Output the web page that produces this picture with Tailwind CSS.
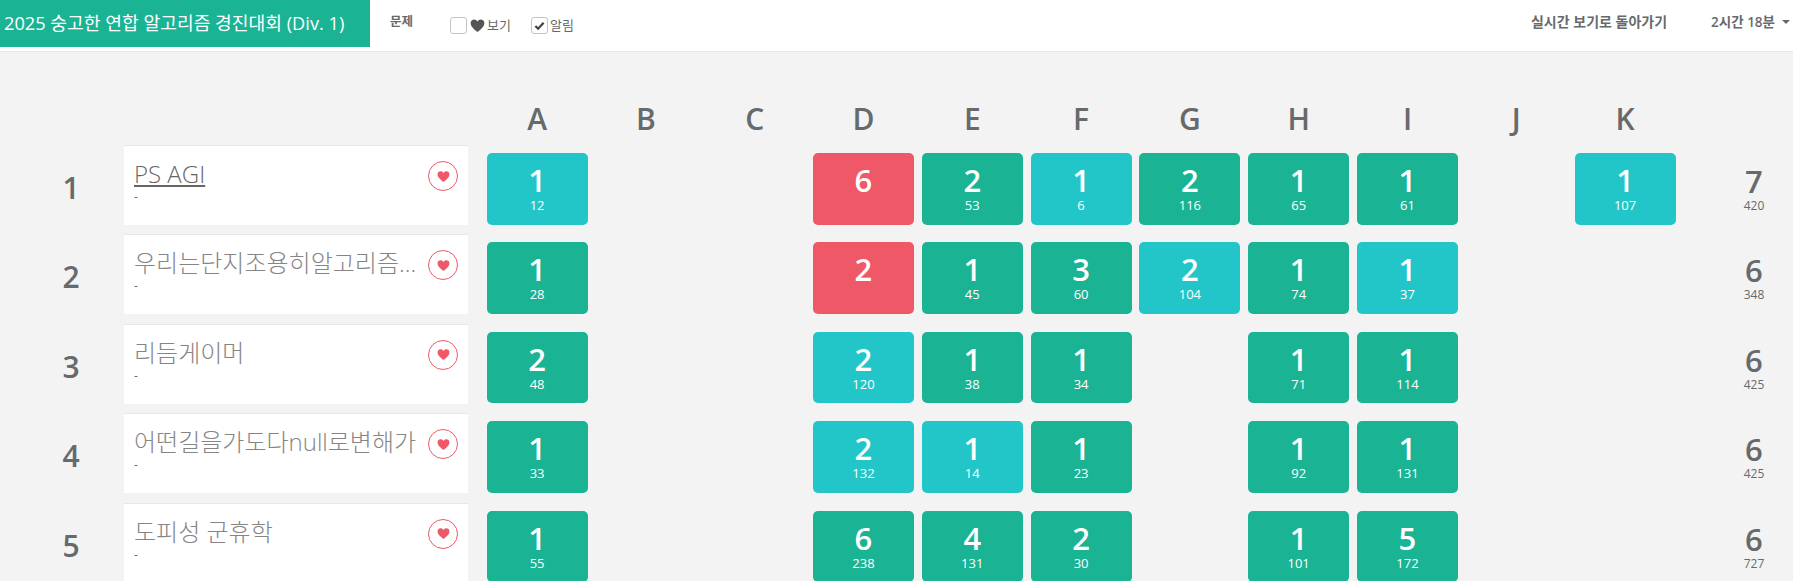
<!DOCTYPE html>
<html lang="ko">
<head>
  <meta charset="UTF-8" />
  <title>2025 숭고한 연합 알고리즘 경진대회 (Div. 1)</title>
  <script src="https://cdn.jsdelivr.net/npm/@tailwindcss/browser@4"></script>
</head>
<body class="h-[581px] overflow-hidden bg-[#f3f3f3] font-['Open_Sans','Noto_Sans_CJK_KR',sans-serif] text-[#666a6c]">

  <!-- Header -->
  <header class="flex h-[52px] items-start border-b border-[#e7e7e7] bg-white">
    <a class="flex h-[47px] w-[370px] items-center bg-[#1ab394] pl-1 text-[18.2px] text-white">2025 숭고한 연합 알고리즘 경진대회 (Div. 1)</a>
    <span class="ml-5 mt-[13px] text-[12.5px] leading-[18px] font-bold">문제</span>
    <label class="ml-[37px] mt-4 flex items-center text-[13px]">
      <span class="h-[17px] w-[17px] rounded-[3px] border border-[#c4c4c4] bg-white"></span>
      <svg class="ml-[3px] h-[15px] w-[15px] text-[#555]" viewBox="0 0 24 24" fill="currentColor"><path d="M12 22S1 15 1 8.200C1 4.600 3.700 2.500 6.600 2.500c2.300 0 4.200 1.200 5.400 3.200 1.200-2 3.100-3.200 5.400-3.200 2.900 0 5.600 2.100 5.600 5.700C23 15 12 22 12 22z"/></svg>
      <span class="ml-[2px]">보기</span>
    </label>
    <label class="ml-[20px] mt-4 flex items-center text-[13px]">
      <span class="flex h-[17px] w-[17px] items-center justify-center rounded-[3px] border border-[#c4c4c4] bg-white">
        <svg class="h-[11px] w-[11px]" viewBox="0 0 24 24" fill="none" stroke="#444" stroke-width="5"><path d="M3 13l6 6L21 6"/></svg>
      </span>
      <span class="ml-[2px]">알림</span>
    </label>
    <a class="ml-auto mt-[13px] text-[14px] leading-[18px] font-semibold">실시간 보기로 돌아가기</a>
    <a class="ml-[44px] mr-[3px] mt-[13px] flex items-center text-[13.5px] leading-[18px] font-semibold">2시간 18분
      <span class="ml-[7px] h-0 w-0 border-x-[4px] border-t-[4px] border-x-transparent border-t-[#666a6c]"></span>
    </a>
  </header>

  <!-- Scoreboard -->
  <main class="mt-[43px] grid grid-cols-[124px_358.7px_repeat(11,108.8px)_113px] grid-rows-[50px] auto-rows-[89.4px]">
    <div></div><div></div>
    <div class="text-center text-[30px] leading-[47px] font-semibold">A</div>
    <div class="text-center text-[30px] leading-[47px] font-semibold">B</div>
    <div class="text-center text-[30px] leading-[47px] font-semibold">C</div>
    <div class="text-center text-[30px] leading-[47px] font-semibold">D</div>
    <div class="text-center text-[30px] leading-[47px] font-semibold">E</div>
    <div class="text-center text-[30px] leading-[47px] font-semibold">F</div>
    <div class="text-center text-[30px] leading-[47px] font-semibold">G</div>
    <div class="text-center text-[30px] leading-[47px] font-semibold">H</div>
    <div class="text-center text-[30px] leading-[47px] font-semibold">I</div>
    <div class="text-center text-[30px] leading-[47px] font-semibold">J</div>
    <div class="text-center text-[30px] leading-[47px] font-semibold">K</div>
    <div></div>

    <!-- 1 -->
    <div class="pl-[18px] pt-[23px] text-center text-[30px] leading-[40px] font-semibold">1</div>
    <div class="relative h-[80px] w-[344px] border-t border-[#e7e7e7] bg-white pl-[10px] pr-[51px]">
      <div class="truncate pt-[10px] text-[24px] leading-[36px] font-light text-[#666] underline">PS AGI</div>
      <div class="-mt-[2px] text-[12px] leading-[14px]">-</div>
      <span class="absolute left-[304px] top-[15px] flex h-[30px] w-[30px] items-center justify-center rounded-full border border-[#ef5866]"><svg class="h-[13px] w-[13px] text-[#ef5866]" viewBox="0 0 24 24" fill="currentColor"><path d="M12 22S1 15 1 8.200C1 4.600 3.700 2.500 6.600 2.500c2.300 0 4.200 1.200 5.400 3.200 1.200-2 3.100-3.200 5.400-3.200 2.900 0 5.600 2.100 5.600 5.700C23 15 12 22 12 22z"/></svg></span>
    </div>
    <div class="mx-[3.9px] mt-2 h-[71.5px] rounded-[5px] bg-[#23c6c8] pt-[8px] text-center text-white"><div class="text-[31px] leading-[38px] font-semibold">1</div><div class="-mt-[1px] text-[13px] leading-[14px]">12</div></div>
    <div></div><div></div>
    <div class="mx-[3.9px] mt-2 h-[71.5px] rounded-[5px] bg-[#ef5866] pt-[8px] text-center text-white"><div class="text-[31px] leading-[38px] font-semibold">6</div></div>
    <div class="mx-[3.9px] mt-2 h-[71.5px] rounded-[5px] bg-[#1ab394] pt-[8px] text-center text-white"><div class="text-[31px] leading-[38px] font-semibold">2</div><div class="-mt-[1px] text-[13px] leading-[14px]">53</div></div>
    <div class="mx-[3.9px] mt-2 h-[71.5px] rounded-[5px] bg-[#23c6c8] pt-[8px] text-center text-white"><div class="text-[31px] leading-[38px] font-semibold">1</div><div class="-mt-[1px] text-[13px] leading-[14px]">6</div></div>
    <div class="mx-[3.9px] mt-2 h-[71.5px] rounded-[5px] bg-[#1ab394] pt-[8px] text-center text-white"><div class="text-[31px] leading-[38px] font-semibold">2</div><div class="-mt-[1px] text-[13px] leading-[14px]">116</div></div>
    <div class="mx-[3.9px] mt-2 h-[71.5px] rounded-[5px] bg-[#1ab394] pt-[8px] text-center text-white"><div class="text-[31px] leading-[38px] font-semibold">1</div><div class="-mt-[1px] text-[13px] leading-[14px]">65</div></div>
    <div class="mx-[3.9px] mt-2 h-[71.5px] rounded-[5px] bg-[#1ab394] pt-[8px] text-center text-white"><div class="text-[31px] leading-[38px] font-semibold">1</div><div class="-mt-[1px] text-[13px] leading-[14px]">61</div></div>
    <div></div>
    <div class="mx-[3.9px] mt-2 h-[71.5px] rounded-[5px] bg-[#23c6c8] pt-[8px] text-center text-white"><div class="text-[31px] leading-[38px] font-semibold">1</div><div class="-mt-[1px] text-[13px] leading-[14px]">107</div></div>
    <div class="pl-9 pt-[17px] text-center"><div class="text-[31px] leading-[38px] font-semibold">7</div><div class="-mt-[1px] text-[12px] leading-[14px]">420</div></div>

    <!-- 2 -->
    <div class="pl-[18px] pt-[23px] text-center text-[30px] leading-[40px] font-semibold">2</div>
    <div class="relative h-[80px] w-[344px] border-t border-[#e7e7e7] bg-white pl-[10px] pr-[51px]">
      <div class="truncate pt-[10px] text-[24px] leading-[36px] font-light text-[#858585]">우리는단지조용히알고리즘을풀뿐입니다</div>
      <div class="-mt-[2px] text-[12px] leading-[14px]">-</div>
      <span class="absolute left-[304px] top-[15px] flex h-[30px] w-[30px] items-center justify-center rounded-full border border-[#ef5866]"><svg class="h-[13px] w-[13px] text-[#ef5866]" viewBox="0 0 24 24" fill="currentColor"><path d="M12 22S1 15 1 8.200C1 4.600 3.700 2.500 6.600 2.500c2.300 0 4.200 1.200 5.400 3.200 1.200-2 3.100-3.200 5.400-3.200 2.900 0 5.600 2.100 5.600 5.700C23 15 12 22 12 22z"/></svg></span>
    </div>
    <div class="mx-[3.9px] mt-2 h-[71.5px] rounded-[5px] bg-[#1ab394] pt-[8px] text-center text-white"><div class="text-[31px] leading-[38px] font-semibold">1</div><div class="-mt-[1px] text-[13px] leading-[14px]">28</div></div>
    <div></div><div></div>
    <div class="mx-[3.9px] mt-2 h-[71.5px] rounded-[5px] bg-[#ef5866] pt-[8px] text-center text-white"><div class="text-[31px] leading-[38px] font-semibold">2</div></div>
    <div class="mx-[3.9px] mt-2 h-[71.5px] rounded-[5px] bg-[#1ab394] pt-[8px] text-center text-white"><div class="text-[31px] leading-[38px] font-semibold">1</div><div class="-mt-[1px] text-[13px] leading-[14px]">45</div></div>
    <div class="mx-[3.9px] mt-2 h-[71.5px] rounded-[5px] bg-[#1ab394] pt-[8px] text-center text-white"><div class="text-[31px] leading-[38px] font-semibold">3</div><div class="-mt-[1px] text-[13px] leading-[14px]">60</div></div>
    <div class="mx-[3.9px] mt-2 h-[71.5px] rounded-[5px] bg-[#23c6c8] pt-[8px] text-center text-white"><div class="text-[31px] leading-[38px] font-semibold">2</div><div class="-mt-[1px] text-[13px] leading-[14px]">104</div></div>
    <div class="mx-[3.9px] mt-2 h-[71.5px] rounded-[5px] bg-[#1ab394] pt-[8px] text-center text-white"><div class="text-[31px] leading-[38px] font-semibold">1</div><div class="-mt-[1px] text-[13px] leading-[14px]">74</div></div>
    <div class="mx-[3.9px] mt-2 h-[71.5px] rounded-[5px] bg-[#23c6c8] pt-[8px] text-center text-white"><div class="text-[31px] leading-[38px] font-semibold">1</div><div class="-mt-[1px] text-[13px] leading-[14px]">37</div></div>
    <div></div><div></div>
    <div class="pl-9 pt-[17px] text-center"><div class="text-[31px] leading-[38px] font-semibold">6</div><div class="-mt-[1px] text-[12px] leading-[14px]">348</div></div>

    <!-- 3 -->
    <div class="pl-[18px] pt-[23px] text-center text-[30px] leading-[40px] font-semibold">3</div>
    <div class="relative h-[80px] w-[344px] border-t border-[#e7e7e7] bg-white pl-[10px] pr-[51px]">
      <div class="truncate pt-[10px] text-[24px] leading-[36px] font-light text-[#858585]">리듬게이머</div>
      <div class="-mt-[2px] text-[12px] leading-[14px]">-</div>
      <span class="absolute left-[304px] top-[15px] flex h-[30px] w-[30px] items-center justify-center rounded-full border border-[#ef5866]"><svg class="h-[13px] w-[13px] text-[#ef5866]" viewBox="0 0 24 24" fill="currentColor"><path d="M12 22S1 15 1 8.200C1 4.600 3.700 2.500 6.600 2.500c2.300 0 4.200 1.200 5.400 3.200 1.200-2 3.100-3.200 5.400-3.200 2.900 0 5.600 2.100 5.600 5.700C23 15 12 22 12 22z"/></svg></span>
    </div>
    <div class="mx-[3.9px] mt-2 h-[71.5px] rounded-[5px] bg-[#1ab394] pt-[8px] text-center text-white"><div class="text-[31px] leading-[38px] font-semibold">2</div><div class="-mt-[1px] text-[13px] leading-[14px]">48</div></div>
    <div></div><div></div>
    <div class="mx-[3.9px] mt-2 h-[71.5px] rounded-[5px] bg-[#23c6c8] pt-[8px] text-center text-white"><div class="text-[31px] leading-[38px] font-semibold">2</div><div class="-mt-[1px] text-[13px] leading-[14px]">120</div></div>
    <div class="mx-[3.9px] mt-2 h-[71.5px] rounded-[5px] bg-[#1ab394] pt-[8px] text-center text-white"><div class="text-[31px] leading-[38px] font-semibold">1</div><div class="-mt-[1px] text-[13px] leading-[14px]">38</div></div>
    <div class="mx-[3.9px] mt-2 h-[71.5px] rounded-[5px] bg-[#1ab394] pt-[8px] text-center text-white"><div class="text-[31px] leading-[38px] font-semibold">1</div><div class="-mt-[1px] text-[13px] leading-[14px]">34</div></div>
    <div></div>
    <div class="mx-[3.9px] mt-2 h-[71.5px] rounded-[5px] bg-[#1ab394] pt-[8px] text-center text-white"><div class="text-[31px] leading-[38px] font-semibold">1</div><div class="-mt-[1px] text-[13px] leading-[14px]">71</div></div>
    <div class="mx-[3.9px] mt-2 h-[71.5px] rounded-[5px] bg-[#1ab394] pt-[8px] text-center text-white"><div class="text-[31px] leading-[38px] font-semibold">1</div><div class="-mt-[1px] text-[13px] leading-[14px]">114</div></div>
    <div></div><div></div>
    <div class="pl-9 pt-[17px] text-center"><div class="text-[31px] leading-[38px] font-semibold">6</div><div class="-mt-[1px] text-[12px] leading-[14px]">425</div></div>

    <!-- 4 -->
    <div class="pl-[18px] pt-[23px] text-center text-[30px] leading-[40px] font-semibold">4</div>
    <div class="relative h-[80px] w-[344px] border-t border-[#e7e7e7] bg-white pl-[10px] pr-[51px]">
      <div class="truncate pt-[10px] text-[24px] leading-[36px] font-light text-[#858585]">어떤길을가도다null로변해가</div>
      <div class="-mt-[2px] text-[12px] leading-[14px]">-</div>
      <span class="absolute left-[304px] top-[15px] flex h-[30px] w-[30px] items-center justify-center rounded-full border border-[#ef5866]"><svg class="h-[13px] w-[13px] text-[#ef5866]" viewBox="0 0 24 24" fill="currentColor"><path d="M12 22S1 15 1 8.200C1 4.600 3.700 2.500 6.600 2.500c2.300 0 4.200 1.200 5.400 3.200 1.200-2 3.100-3.200 5.400-3.200 2.900 0 5.600 2.100 5.600 5.700C23 15 12 22 12 22z"/></svg></span>
    </div>
    <div class="mx-[3.9px] mt-2 h-[71.5px] rounded-[5px] bg-[#1ab394] pt-[8px] text-center text-white"><div class="text-[31px] leading-[38px] font-semibold">1</div><div class="-mt-[1px] text-[13px] leading-[14px]">33</div></div>
    <div></div><div></div>
    <div class="mx-[3.9px] mt-2 h-[71.5px] rounded-[5px] bg-[#23c6c8] pt-[8px] text-center text-white"><div class="text-[31px] leading-[38px] font-semibold">2</div><div class="-mt-[1px] text-[13px] leading-[14px]">132</div></div>
    <div class="mx-[3.9px] mt-2 h-[71.5px] rounded-[5px] bg-[#23c6c8] pt-[8px] text-center text-white"><div class="text-[31px] leading-[38px] font-semibold">1</div><div class="-mt-[1px] text-[13px] leading-[14px]">14</div></div>
    <div class="mx-[3.9px] mt-2 h-[71.5px] rounded-[5px] bg-[#1ab394] pt-[8px] text-center text-white"><div class="text-[31px] leading-[38px] font-semibold">1</div><div class="-mt-[1px] text-[13px] leading-[14px]">23</div></div>
    <div></div>
    <div class="mx-[3.9px] mt-2 h-[71.5px] rounded-[5px] bg-[#1ab394] pt-[8px] text-center text-white"><div class="text-[31px] leading-[38px] font-semibold">1</div><div class="-mt-[1px] text-[13px] leading-[14px]">92</div></div>
    <div class="mx-[3.9px] mt-2 h-[71.5px] rounded-[5px] bg-[#1ab394] pt-[8px] text-center text-white"><div class="text-[31px] leading-[38px] font-semibold">1</div><div class="-mt-[1px] text-[13px] leading-[14px]">131</div></div>
    <div></div><div></div>
    <div class="pl-9 pt-[17px] text-center"><div class="text-[31px] leading-[38px] font-semibold">6</div><div class="-mt-[1px] text-[12px] leading-[14px]">425</div></div>

    <!-- 5 -->
    <div class="pl-[18px] pt-[23px] text-center text-[30px] leading-[40px] font-semibold">5</div>
    <div class="relative h-[80px] w-[344px] border-t border-[#e7e7e7] bg-white pl-[10px] pr-[51px]">
      <div class="truncate pt-[10px] text-[24px] leading-[36px] font-light text-[#858585]">도피성 군휴학</div>
      <div class="-mt-[2px] text-[12px] leading-[14px]">-</div>
      <span class="absolute left-[304px] top-[15px] flex h-[30px] w-[30px] items-center justify-center rounded-full border border-[#ef5866]"><svg class="h-[13px] w-[13px] text-[#ef5866]" viewBox="0 0 24 24" fill="currentColor"><path d="M12 22S1 15 1 8.200C1 4.600 3.700 2.500 6.600 2.500c2.300 0 4.200 1.200 5.400 3.200 1.200-2 3.100-3.200 5.400-3.200 2.900 0 5.600 2.100 5.600 5.700C23 15 12 22 12 22z"/></svg></span>
    </div>
    <div class="mx-[3.9px] mt-2 h-[71.5px] rounded-[5px] bg-[#1ab394] pt-[8px] text-center text-white"><div class="text-[31px] leading-[38px] font-semibold">1</div><div class="-mt-[1px] text-[13px] leading-[14px]">55</div></div>
    <div></div><div></div>
    <div class="mx-[3.9px] mt-2 h-[71.5px] rounded-[5px] bg-[#1ab394] pt-[8px] text-center text-white"><div class="text-[31px] leading-[38px] font-semibold">6</div><div class="-mt-[1px] text-[13px] leading-[14px]">238</div></div>
    <div class="mx-[3.9px] mt-2 h-[71.5px] rounded-[5px] bg-[#1ab394] pt-[8px] text-center text-white"><div class="text-[31px] leading-[38px] font-semibold">4</div><div class="-mt-[1px] text-[13px] leading-[14px]">131</div></div>
    <div class="mx-[3.9px] mt-2 h-[71.5px] rounded-[5px] bg-[#1ab394] pt-[8px] text-center text-white"><div class="text-[31px] leading-[38px] font-semibold">2</div><div class="-mt-[1px] text-[13px] leading-[14px]">30</div></div>
    <div></div>
    <div class="mx-[3.9px] mt-2 h-[71.5px] rounded-[5px] bg-[#1ab394] pt-[8px] text-center text-white"><div class="text-[31px] leading-[38px] font-semibold">1</div><div class="-mt-[1px] text-[13px] leading-[14px]">101</div></div>
    <div class="mx-[3.9px] mt-2 h-[71.5px] rounded-[5px] bg-[#1ab394] pt-[8px] text-center text-white"><div class="text-[31px] leading-[38px] font-semibold">5</div><div class="-mt-[1px] text-[13px] leading-[14px]">172</div></div>
    <div></div><div></div>
    <div class="pl-9 pt-[17px] text-center"><div class="text-[31px] leading-[38px] font-semibold">6</div><div class="-mt-[1px] text-[12px] leading-[14px]">727</div></div>
  </main>

</body>
</html>
